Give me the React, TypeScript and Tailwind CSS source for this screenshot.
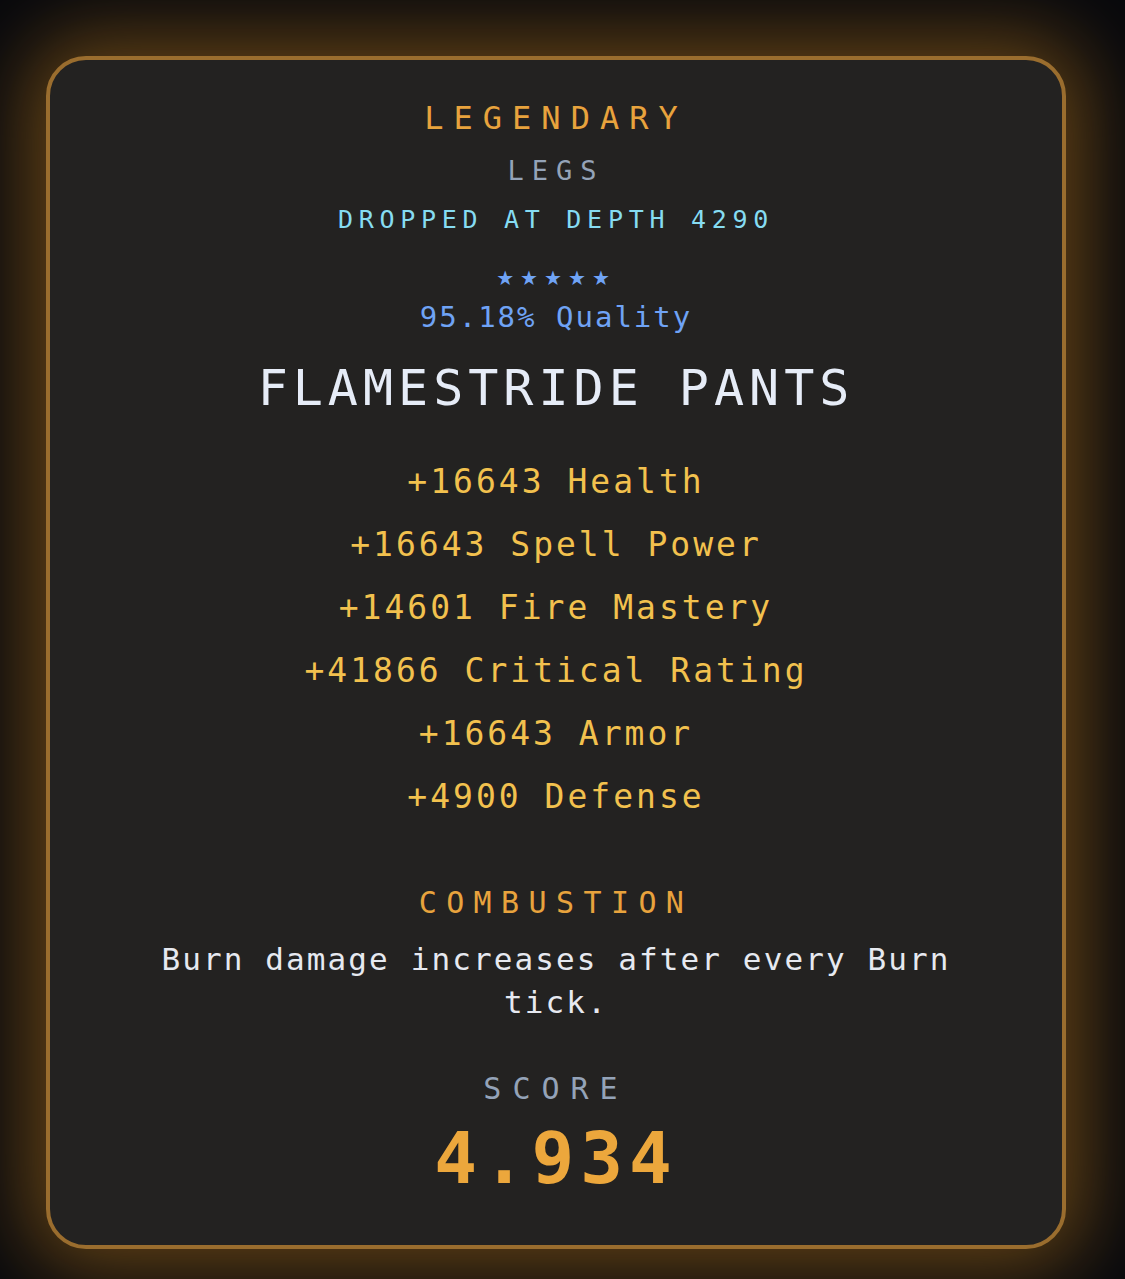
import React from 'react';

const stats = [
  { value: '+16643', label: 'Health' },
  { value: '+16643', label: 'Spell Power' },
  { value: '+14601', label: 'Fire Mastery' },
  { value: '+41866', label: 'Critical Rating' },
  { value: '+16643', label: 'Armor' },
  { value: '+4900', label: 'Defense' },
];

const mono = "font-['DejaVu_Sans_Mono','Liberation_Mono',monospace]";

export default function App() {
  return (
    <div className="min-h-[1279px] w-full bg-[#08090d] pt-[56px] pb-[30px]">
      <div
        className={`ml-[46px] flex h-[1193px] w-[1020px] flex-col items-center rounded-[40px] border-4 border-[#9a6d2e] bg-[#232221] pt-[38px] text-center shadow-[0_0_80px_20px_rgba(175,115,30,0.55)] ${mono}`}
      >
        <div className="text-[32px] leading-[40px] tracking-[10px] text-[#e8a33d]">LEGENDARY</div>
        <div className="mt-[16px] text-[27px] leading-[34px] tracking-[8px] text-[#94a3b8]">LEGS</div>
        <div className="mt-[17px] text-[25px] leading-[30px] tracking-[5.7px] text-[#86dcf2]">
          DROPPED AT DEPTH 4290
        </div>
        <div className="mt-[31px] font-['DejaVu_Sans',sans-serif] text-[20px] leading-[24px] tracking-[6px] text-[#6fa3f5]">
          ★★★★★
        </div>
        <div className="mt-[10px] text-[29px] leading-[34px] tracking-[2px] text-[#6fa3f5]">95.18% Quality</div>
        <h1 className="mt-[24px] text-[50px] leading-[60px] tracking-[5px] text-[#e6ecf7]">FLAMESTRIDE PANTS</h1>

        <div className="mt-[32px] flex flex-col items-center">
          {stats.map((s, i) => (
            <div key={i} className="text-[33px] leading-[63px] tracking-[3px] text-[#f2c14e]">
              {s.value} {s.label}
            </div>
          ))}
        </div>

        <div className="mt-[57px] text-[30px] leading-[36px] tracking-[9.4px] text-[#e8a33d]">COMBUSTION</div>
        <p className="mt-[17px] w-[820px] text-[31px] leading-[43px] tracking-[2.1px] text-[#e6e9f0]">
          Burn damage increases after every Burn tick.
        </p>

        <div className="mt-[47px] text-[30px] leading-[36px] tracking-[11px] text-[#94a3b8]">SCORE</div>
        <div className="mt-[12px] text-[71px] font-bold leading-[80px] tracking-[6px] text-[#eca73c]">4.934</div>
      </div>
    </div>
  );
}
